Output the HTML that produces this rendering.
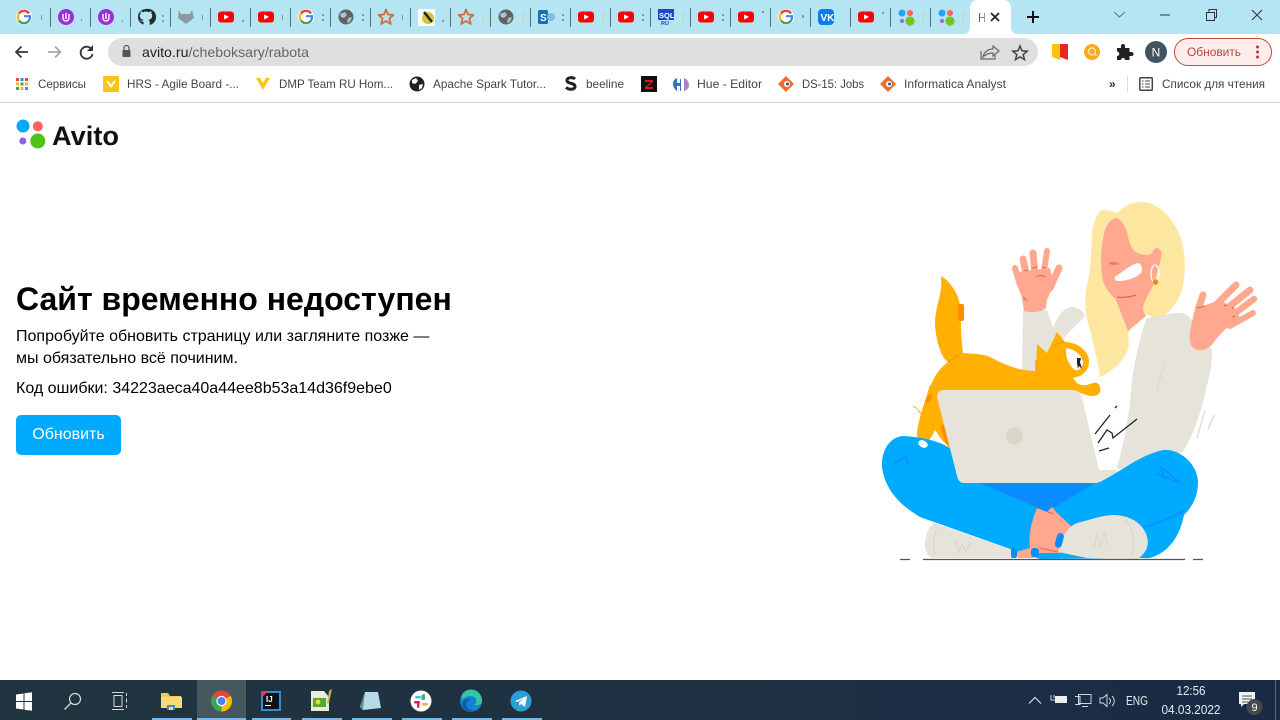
<!DOCTYPE html>
<html lang="ru"><head><meta charset="utf-8"><title>Avito</title>
<style>
html,body{margin:0;padding:0;width:1280px;height:720px;overflow:hidden;background:#fff}
svg{position:absolute;left:0;top:0}
text{font-family:"Liberation Sans",sans-serif}
.b{font-size:12px;fill:#444}
.h{position:absolute;left:16px;top:279px;margin:0;font:bold 32px/40px "Liberation Sans",sans-serif;color:#000;white-space:nowrap}
.p{position:absolute;left:16px;margin:0;font:16px/22px "Liberation Sans",sans-serif;color:#000;white-space:nowrap}
.btn{position:absolute;left:16px;top:415px;width:105px;height:40px;border-radius:5px;background:#00aaff;color:#fff;font:16px/39px "Liberation Sans",sans-serif;text-align:center}
</style></head><body>
<svg width="1280" height="720" viewBox="0 0 1280 720" xmlns="http://www.w3.org/2000/svg">
<defs>
<g id="gg"><circle r="8" fill="#fff"/><path d="M5-3.5A6 6 0 0 0-5-3.5" stroke="#e94235" stroke-width="2.4" fill="none"/><path d="M-5-3.5A6 6 0 0 0-5 3.5" stroke="#fabb05" stroke-width="2.4" fill="none"/><path d="M-5 3.5A6 6 0 0 0 5 3.5" stroke="#34a853" stroke-width="2.4" fill="none"/><path d="M5 3.5A6 6 0 0 0 6-.8H0" stroke="#4285f4" stroke-width="2.2" fill="none"/></g>
<g id="yt"><rect x="-8" y="-5.5" width="16" height="11" rx="3" fill="#f00"/><path d="M-2-2.6 3 0-2 2.6z" fill="#fff"/></g>
<g id="ut"><circle r="8" fill="#9b30d9"/><path d="M-3-3V1A3 3 0 0 0 3 1V-3M0-4V2" stroke="#fff" stroke-width="1.4" fill="none"/></g>
<g id="gl"><circle r="7.5" fill="#5f6368"/><path d="M-6-3 -1-5 1-2-2 1-5 0zM2 1 6 0 4 5 1 6z" fill="#b9c0c4"/></g>
<g id="st"><path d="M0-7.5 2-2.5 7.5-2 3.4 1.4 4.8 7 0 4-4.8 7-3.4 1.4-7.5-2-2-2.5z" fill="none" stroke="#c9703c" stroke-width="1.8" stroke-linejoin="round"/></g>
<g id="av"><circle cx="-4" cy="-4" r="3.5" fill="#1ea5f5"/><circle cx="4" cy="-4" r="3" fill="#f3625d"/><circle cx="-4" cy="4" r="2.2" fill="#9b6be0"/><circle cx="4" cy="4" r="4.6" fill="#74c618"/></g>
<g id="sep"><rect x="0" y="8" width="1" height="19" fill="#52717c"/></g>
<linearGradient id="tb" x1="0" x2="1" y1="0" y2="0"><stop offset="0" stop-color="#20343f"/><stop offset=".5" stop-color="#1f3142"/><stop offset="1" stop-color="#192a45"/></linearGradient>
</defs>

<!-- tab strip -->
<rect width="1280" height="34" fill="#b5e5f2"/>
<use href="#sep" x="50"/><use href="#sep" x="90"/><use href="#sep" x="130"/><use href="#sep" x="170"/><use href="#sep" x="210"/><use href="#sep" x="250"/><use href="#sep" x="290"/><use href="#sep" x="330"/><use href="#sep" x="370"/><use href="#sep" x="410"/><use href="#sep" x="450"/><use href="#sep" x="490"/><use href="#sep" x="530"/><use href="#sep" x="570"/><use href="#sep" x="610"/><use href="#sep" x="650"/><use href="#sep" x="690"/><use href="#sep" x="730"/><use href="#sep" x="770"/><use href="#sep" x="810"/><use href="#sep" x="850"/><use href="#sep" x="890"/><use href="#sep" x="930"/>
<use href="#gg" x="24" y="17"/><use href="#ut" x="66" y="17"/><use href="#ut" x="106" y="17"/>
<path d="M146 9a8 8 0 0 0-2.5 15.6v-3c-2 .4-3-.8-3.4-2 1 .5 1.6 1 2.2 1.4.4-.6.8-1 1.2-1.2-2-.3-3.7-1.3-3.7-4 0-1 .4-1.7.9-2.4-.2-.5-.3-1.3.1-2.2.9 0 1.7.5 2.3 1a7 7 0 0 1 5.8 0c.6-.5 1.4-1 2.3-1 .4.9.3 1.7.1 2.2.5.7.9 1.4.9 2.4 0 2.7-1.7 3.7-3.7 4 .6.5 1.2 1.3 1.2 2.4v2.8A8 8 0 0 0 146 9z" fill="#24292e"/>
<path d="M179 10l2 4h9l2-4 2 8-8 6-8-6z" fill="#8f9a9e"/>
<use href="#yt" x="226" y="17"/><use href="#yt" x="266" y="17"/><use href="#gg" x="306" y="17"/><use href="#gl" x="346" y="17"/><use href="#st" x="386" y="17"/>
<g><rect x="418" y="9" width="17" height="17" fill="#fff"/><ellipse cx="428" cy="18" rx="6" ry="6" fill="#d8c23a"/><path d="M424 12l8 10" stroke="#222" stroke-width="2.5"/></g>
<use href="#st" x="466" y="17"/><use href="#gl" x="506" y="17"/>
<g><rect x="538" y="10" width="10" height="14" rx="1.5" fill="#1a6fb5"/><text x="540" y="21" font-size="10" font-weight="bold" fill="#fff">S</text><circle cx="551" cy="17" r="4" fill="#7cc0dd"/></g>
<use href="#yt" x="586" y="17"/><use href="#yt" x="626" y="17"/>
<g><rect x="658" y="9" width="16" height="11" fill="#1c48c8"/><text x="659" y="18" font-size="7.5" font-weight="bold" fill="#fff">SQL</text><text x="661" y="25" font-size="5.5" font-weight="bold" fill="#1c48c8">RU</text></g>
<use href="#yt" x="706" y="17"/><use href="#yt" x="746" y="17"/><use href="#gg" x="786" y="17"/>
<rect x="818" y="9" width="16" height="16" rx="4" fill="#0c7cf2"/><text x="820.5" y="21" font-size="10" font-weight="bold" fill="#fff">VK</text>
<use href="#yt" x="866" y="17"/><use href="#av" x="906" y="17"/><use href="#av" x="946" y="17"/>
<g fill="#8b9a9e"><rect x="41" y="15" width="1" height="5"/><rect x="81" y="19" width="1" height="2"/><rect x="122" y="20" width="1" height="2"/><rect x="162" y="15" width="2" height="2"/><rect x="162" y="20" width="2" height="2"/><rect x="202" y="15" width="1" height="5"/><rect x="242" y="20" width="2" height="2"/><rect x="282" y="15" width="1" height="5"/><rect x="322" y="14" width="2" height="2"/><rect x="322" y="19" width="2" height="2"/><rect x="362" y="14" width="2" height="2"/><rect x="362" y="19" width="2" height="2"/><rect x="402" y="15" width="1" height="5"/><rect x="442" y="20" width="2" height="2"/></g>
<g fill="#c8d8c8"><rect x="482" y="14" width="2" height="8"/><rect x="522" y="12" width="2" height="10"/><rect x="602" y="12" width="2" height="10"/><rect x="682" y="12" width="2" height="10"/><rect x="922" y="12" width="2" height="10"/><rect x="962" y="12" width="2" height="10"/></g>
<g fill="#8b9a9e"><rect x="562" y="14" width="2" height="2"/><rect x="562" y="19" width="2" height="2"/><rect x="642" y="14" width="2" height="2"/><rect x="642" y="19" width="2" height="2"/><rect x="722" y="14" width="2" height="2"/><rect x="722" y="19" width="2" height="2"/><rect x="762" y="11" width="2" height="2"/><rect x="802" y="15" width="2" height="3"/><rect x="882" y="12" width="2" height="2"/></g>
<!-- active tab -->
<path d="M962 34c6 0 8-2 8-8V8c0-5 3-8 8-8h25c5 0 8 3 8 8v18c0 6 2 8 8 8z" fill="#fff"/>
<rect x="979" y="13" width="1" height="9" fill="#555"/><rect x="984" y="13" width="1" height="9" fill="#999"/><rect x="979" y="17" width="5" height="1" fill="#777"/>
<path d="M991 13l8 8M999 13l-8 8" stroke="#222" stroke-width="1.8"/>
<path d="M1033 11v12M1027 17h12" stroke="#111" stroke-width="2"/>
<path d="M1114 12l5.5 5 5.5-5" fill="none" stroke="#50707c" stroke-width="1"/>
<path d="M1160 15h10" stroke="#333" stroke-width="1"/>
<rect x="1206.5" y="12.5" width="8" height="8" fill="none" stroke="#333"/><path d="M1209 12v-2.5h7.5v8H1215" fill="none" stroke="#333"/>
<path d="M1252 10l10 10M1262 10l-10 10" stroke="#333" stroke-width="1"/>

<!-- toolbar -->
<rect y="34" width="1280" height="68" fill="#fff"/>
<path d="M28 52H16M21.5 46.5l-5.5 5.5 5.5 5.5" fill="none" stroke="#333" stroke-width="1.7"/>
<path d="M48 52h12.5M55 46.5l5.500 5.500-5.500 5.500" fill="none" stroke="#a8a8a8" stroke-width="1.7"/>
<path d="M92 50a6 6 0 1 0 .5 4" fill="none" stroke="#333" stroke-width="1.8"/><path d="M93 45v6h-6z" fill="#333"/>
<rect x="108" y="38" width="930" height="28" rx="14" fill="#dfdfdf"/>
<rect x="122.5" y="50" width="8" height="7" rx="1" fill="#555"/><path d="M124 50v-2a2.5 2.5 0 0 1 5 0v2" fill="none" stroke="#555" stroke-width="1.2"/>
<text x="142" y="57" font-size="14" fill="#222" textLength="167" lengthAdjust="spacingAndGlyphs">avito.ru<tspan fill="#666">/cheboksary/rabota</tspan></text>
<path d="M981 51v8h14v-4M983 57c1-5 5-8 10-8v-3l6 5-6 5v-3c-4 0-7 1-10 4z" fill="none" stroke="#666" stroke-width="1.2"/>
<path d="M1020 46l2 4.800 5.200.4-4 3.400 1.300 5-4.500-2.700-4.500 2.700 1.300-5-4-3.400 5.200-.4z" fill="none" stroke="#444" stroke-width="1.5"/>
<path d="M1052 44h8v16l-8-3z" fill="#f9c310"/><path d="M1060 44h8v16l-8-3z" fill="#e8251f"/>
<circle cx="1092" cy="52" r="8" fill="#f8a91c"/><circle cx="1092" cy="51.5" r="3.5" fill="none" stroke="#fde2a8" stroke-width="1.5"/><path d="M1094.5 54l2 2" stroke="#fde2a8" stroke-width="1.5"/>
<path d="M1117 48h4v-2a2 2 0 0 1 4 0v2h4.500v4h2a2 2 0 0 1 0 4h-2v4h-4.500a2 2 0 0 0-4 0h-4v-4a2 2 0 0 0 0-4.500z" fill="#222"/>
<circle cx="1156" cy="52" r="11" fill="#3f5560"/><text x="1156" y="56.5" font-size="12" fill="#fff" text-anchor="middle">N</text>
<rect x="1174.5" y="38.5" width="97" height="27" rx="13.5" fill="#fdeeec" stroke="#c9473f"/>
<text x="1187" y="56" font-size="12" fill="#b3453d" textLength="54" lengthAdjust="spacingAndGlyphs">Обновить</text>
<circle cx="1257.5" cy="47" r="1.5" fill="#c0392f"/><circle cx="1257.5" cy="52" r="1.5" fill="#c0392f"/><circle cx="1257.5" cy="57" r="1.5" fill="#c0392f"/>

<!-- bookmarks -->
<g><rect x="16" y="78" width="3" height="3" fill="#e8453c"/><rect x="20.5" y="78" width="3" height="3" fill="#4285f4"/><rect x="25" y="78" width="3" height="3" fill="#e8453c"/><rect x="16" y="82.5" width="3" height="3" fill="#fbbc05"/><rect x="20.5" y="82.5" width="3" height="3" fill="#34a853"/><rect x="25" y="82.5" width="3" height="3" fill="#fbbc05"/><rect x="16" y="87" width="3" height="3" fill="#34a853"/><rect x="20.5" y="87" width="3" height="3" fill="#fbbc05"/><rect x="25" y="87" width="3" height="3" fill="#4285f4"/></g>
<text class="b" x="38" y="88" textLength="48" lengthAdjust="spacingAndGlyphs">Сервисы</text>
<rect x="103" y="76" width="16" height="16" fill="#fcc419"/><path d="M106 81l5 7 5-7h-2.500l-2.500 3.500-2.500-3.500z" fill="#fff"/>
<text class="b" x="127" y="88" textLength="112" lengthAdjust="spacingAndGlyphs">HRS - Agile Board -...</text>
<path d="M256 78l7 12 7-12h-4l-3 5-3-5z" fill="#fcc419"/>
<text class="b" x="279" y="88" textLength="114" lengthAdjust="spacingAndGlyphs">DMP Team RU Hom...</text>
<circle cx="417" cy="84" r="7.5" fill="#222"/><path d="M412 80l4-2 2 3-3 3-3-1zM419 85l4-1-1 4-3 2z" fill="#fff"/>
<text class="b" x="433" y="88" textLength="113" lengthAdjust="spacingAndGlyphs">Apache Spark Tutor...</text>
<path d="M575 79c-2-2-8-2-8 1.500 0 3.500 8 2 8 6 0 3.500-6 3.500-9 1" fill="none" stroke="#222" stroke-width="3"/>
<text class="b" x="586" y="88" textLength="38" lengthAdjust="spacingAndGlyphs">beeline</text>
<rect x="641" y="76" width="16" height="16" fill="#111"/><path d="M645 80h8v2l-6 5h6v2h-8v-2l6-5h-6z" fill="#d6181f"/>
<path d="M677 78c-3 1-4 4-4 6s1 5 4 7v-5h3v5c1 0 1 0 1-1v-10c0-1 0-1-1-1v4h-3z" fill="#2f76bd"/><path d="M684 78c3 1 5 4 5 7s-2 5-5 6z" fill="#a986c9"/>
<text class="b" x="697" y="88" textLength="65" lengthAdjust="spacingAndGlyphs">Hue - Editor</text>
<path d="M786 76l8 8-8 8-8-8z" fill="#ee6c2a"/><circle cx="787" cy="84" r="3" fill="#fff"/><circle cx="787.5" cy="84" r="1.5" fill="#3c4aa5"/>
<text class="b" x="802" y="88" textLength="62" lengthAdjust="spacingAndGlyphs">DS-15: Jobs</text>
<path d="M888 76l8 8-8 8-8-8z" fill="#ee6c2a"/><circle cx="889" cy="84" r="3" fill="#fff"/><circle cx="889.5" cy="84" r="1.5" fill="#3c4aa5"/>
<text class="b" x="904" y="88" textLength="102" lengthAdjust="spacingAndGlyphs">Informatica Analyst</text>
<text x="1109" y="88" font-size="12" font-weight="bold" fill="#333">»</text>
<rect x="1127" y="76" width="1" height="16" fill="#ddd"/>
<rect x="1139.8" y="77.8" width="12.5" height="12.5" rx="1" fill="none" stroke="#444" stroke-width="1.5"/><path d="M1142 81h1.500M1145 81h5M1142 84h1.500M1145 84h5M1142 87h1.500M1145 87h5" stroke="#444"/>
<text class="b" x="1162" y="88" textLength="103" lengthAdjust="spacingAndGlyphs">Список для чтения</text>
<rect y="102" width="1280" height="1" fill="#cfcfcf"/>

<!-- avito logo -->
<circle cx="23" cy="126" r="6.5" fill="#0af"/><circle cx="37.8" cy="126.3" r="5" fill="#ff6163"/><circle cx="22.8" cy="141" r="3.5" fill="#965eeb"/><circle cx="37.8" cy="141" r="7.5" fill="#4ec419"/>
<text x="52" y="145" font-size="27" font-weight="bold" fill="#111" textLength="67" lengthAdjust="spacingAndGlyphs">Avito</text>

<!-- illustration: sweater -->
<path d="M1147 318C1160 316 1175 312 1183 313C1192 315 1200 335 1212 350C1212 365 1210 375 1207 385C1200 420 1190 440 1183 452L1117 470L1097 470L1097 482L1120 482L1117 467C1125 440 1130 410 1132 380C1135 360 1140 335 1147 318z" fill="#e6e3da"/>
<path d="M1023 310L1047 310L1053 328C1058 315 1065 307 1072 307C1078 307 1083 311 1085 316L1060 342L1052 372L1022 372z" fill="#e6e3da"/>
<path d="M1205 410l-8 28M1214 415l-6 14M1165 360l-8 30" stroke="#dcd9cf" stroke-width="1.3" fill="none"/>
<!-- hair silhouette -->
<path d="M1117 213C1125 204 1135 202 1143 202C1160 203 1174 220 1181 238C1186 255 1186 275 1182 290C1178 303 1168 316 1158 317C1152 318 1147 315 1143 312L1128 333L1129 345C1127 358 1112 372 1100 377C1097 360 1094 345 1090 330C1085 315 1084 300 1087 285C1091 270 1091 250 1092 235C1093 222 1098 210 1104 210C1109 210 1113 211 1117 213z" fill="#fde7a0"/>
<!-- face and neck -->
<path d="M1117 218C1124 222 1127 230 1128 237C1130 246 1134 252 1138 253C1146 256 1150 255 1152 253C1154 248 1157 247 1158 248C1162 250 1162 254 1161 258C1158 270 1155 280 1152 288C1147 296 1143 304 1143 310L1146 316L1128 331L1116 300C1108 292 1103 285 1102 276C1100 262 1101 245 1105 230C1108 222 1112 218 1117 218z" fill="#ffa88f"/>
<path d="M1115 277C1122 272 1132 264 1138 263C1142 264 1143 270 1141 273C1135 279 1125 281 1119 281C1115 281 1114 279 1115 277z" fill="#fff"/>
<path d="M1109 263c3-2 7-1 11 1-4 1-8 1-11 0z" fill="#f0796a"/>
<path d="M1117 297c6 1 13 0 19-2" stroke="#e8664f" stroke-width="1.2" fill="none"/>
<ellipse cx="1155" cy="274" rx="4" ry="9" fill="none" stroke="#fff" stroke-width="1.3"/><circle cx="1155.5" cy="282" r="2.8" fill="#f08a12"/>
<!-- right hand -->
<path d="M1194 312L1203 306L1220 300L1236 309L1240 318C1228 326 1220 334 1214 342C1208 350 1202 351 1197 350C1190 348 1189 340 1190 332z" fill="#ffa88f"/>
<g stroke="#ffa88f" stroke-linecap="round" fill="none"><path d="M1198 310l5-15" stroke-width="7"/><path d="M1213 308l23-23" stroke-width="7"/><path d="M1220 314l30-24" stroke-width="7"/><path d="M1226 320l28-21" stroke-width="6.500"/><path d="M1230 326l23-13" stroke-width="6"/></g>
<path d="M1197 308l8-2M1224 306l3-1M1232 307l2 2M1232 316l3 1" stroke="#e8664f" fill="none"/>
<!-- left hand -->
<path d="M1017 284L1018 272L1050 268L1054 284L1047 300L1046 308C1040 313 1030 313 1024 311L1022 298z" fill="#ffa88f"/>
<g stroke="#ffa88f" stroke-linecap="round" fill="none"><path d="M1020 285l-5-17" stroke-width="6"/><path d="M1027 278l-4-19" stroke-width="7"/><path d="M1035 275l-2-22" stroke-width="7"/><path d="M1043 278l4-27" stroke-width="6"/><path d="M1050 288l9-20" stroke-width="7"/></g>
<path d="M1024 271l4-1M1032 268l5-1M1042 267l4 1M1036 277c3-2 7-2 9 0M1023 297l4 4" stroke="#e8664f" fill="none"/>
<!-- cat -->
<path d="M941 276C950 281 958 293 960 305L961 325C961 335 962 345 963 353C975 354 985 354 992 358C1005 365 1020 371 1036 371L1037 344L1047 353L1057 332L1065 342C1075 342 1085 348 1088 356C1091 365 1087 372 1080 376L1073 378L1077 383C1086 389 1092 381 1097 383C1102 386 1101 394 1097 395C1090 398 1082 393 1078 392L1082 400L945 400L930 390C932 378 940 368 948 362C941 358 936 340 935 325C935 305 943 295 941 276z" fill="#ffb000"/>
<path d="M930 385L945 390L952 450L942 440L935 430C932 437 928 442 924 446C920 444 917 440 917 434C918 420 924 405 930 385z" fill="#ffb000"/>
<path d="M940 425L945 425L952 450L946 444z" fill="#ff8c00"/>
<path d="M1066 348C1074 349 1082 355 1083 362C1083 368 1079 371 1075 370C1069 366 1065 356 1066 348z" fill="#fff"/>
<path d="M1077 358l4 0-1 4 2 7-3-3-1 3-1-6z" fill="#222"/>
<rect x="958" y="304" width="6" height="17" rx="2" fill="#ff8c00"/>
<path d="M948 362l12-8M1036 360v11M1054 345l10-3" stroke="#ff8c00" fill="none"/>
<path d="M931 395l-4 7" stroke="#ff8c00" stroke-width="4" fill="none"/>
<path d="M913 406l5 3M918 410l3 4" stroke="#ffb000" fill="none"/>
<!-- under shoe -->
<path d="M925 545C925 535 928 528 934 523L1012 550L1014 558L932 558C928 556 925 552 925 545z" fill="#e6e3da"/>
<path d="M937 530c-5 8-4 20 0 26M955 540l4 12 3-8 4 8 4-10" stroke="#dad6ca" stroke-width="1.2" fill="none"/>
<!-- legs -->
<path d="M903 436C925 437 945 443 952 450L958 477L1100 482C1120 472 1140 455 1163 450C1180 448 1198 465 1198 482C1198 497 1192 507 1184 515C1180 535 1170 552 1150 558L1040 559L1013 550L920 517C900 505 885 490 882 467C881 450 890 437 903 436z" fill="#00aaff"/>
<ellipse cx="923" cy="444" rx="5" ry="3.5" fill="#fff" transform="rotate(25 923 444)"/>
<path d="M980 483H1095L1047 512z" fill="#0a8cff"/>
<path d="M1037 508L1047 512L1052 507L1057 513L1072 527L1060 553L1040 553L1034 558L1018 558L1016 552L1030 548C1028 535 1032 520 1037 508z" fill="#ffa88f"/>
<path d="M1048 512l6 2M1040 548l18 4" stroke="#e8664f" fill="none"/>
<rect x="1011" y="548" width="6" height="10" rx="2" fill="#0a8cff"/><rect x="1031" y="548" width="8" height="9" rx="3" fill="#0a8cff"/>
<path d="M1063 537C1066 530 1072 525 1077 523C1090 520 1102 515 1113 515C1125 515 1134 519 1140 525C1147 532 1150 542 1146 550C1143 555 1140 558 1137 559L1087 558L1058 552C1060 547 1061 542 1063 537z" fill="#e6e3da"/>
<rect x="1056" y="533" width="7" height="15" rx="3.5" fill="#0a8cff" transform="rotate(15 1060 540)"/>
<path d="M1094 548l3-14 4 12 3-14 4 14M1126 520c7 8 10 25 5 36" stroke="#dad6ca" stroke-width="1.2" fill="none"/>
<path d="M1185 510c-14 8-28 14-42 17" stroke="#0a8cff" stroke-width="1.3" fill="none"/>
<path d="M1156 473l-1 0 26 10-20-16 4 14M892 465l14-9 2 9" stroke="#0a8cff" stroke-width="1.3" fill="none"/>
<!-- laptop -->
<path d="M945 390H1072C1078 390 1081 393 1082 398L1101 478C1101 481 1099 483 1096 483H964C960 483 958 480 957 476L937 397C937 392 940 390 945 390z" fill="#e6e3da"/>
<circle cx="1014.5" cy="436" r="8.5" fill="#dbd6c9"/>
<path d="M1095 434l15-19M1115 408l2-2M1098 443l9-13 5 3 1 5 24-19M1099 451l10-3" stroke="#222" stroke-width="1.3" fill="none"/>
<!-- ground -->
<path d="M923 559.5H1185M900 559.5H910M1193 559.5H1203" stroke="#555" stroke-width="1.3"/>

<!-- taskbar -->
<rect y="680" width="1280" height="40" fill="url(#tb)"/>
<rect x="197" y="680" width="49" height="40" fill="#45585f"/>
<path d="M16 694.5l7.500-1v7.500H16zM24.5 693.3l7.500-1.100v8.800h-7.500zM16 702h7.500v7.500l-7.500-1zM24.5 702H32v8.800l-7.500-1.100z" fill="#fff"/>
<circle cx="75" cy="699" r="5.5" fill="none" stroke="#d5d9db" stroke-width="1.2"/><path d="M71 703l-6.500 6.500" stroke="#d5d9db" stroke-width="1.3"/>
<path d="M114 695.5h8v11h-8zM112 692.5h12M112 709.5h12M126.5 693v3M126.5 698.5v4M126.5 705v3" fill="none" stroke="#d5d9db"/>
<path d="M161 693h7l2 3h11v8h-20z" fill="#f6c64e"/><rect x="161" y="697" width="21" height="11" fill="#fbd974"/><path d="M167 705h8v5h-8z" fill="#2f8fd8"/><path d="M169 707h4v3h-4z" fill="#fbd974"/>
<circle cx="221.5" cy="701" r="10.5" fill="#ea4335"/><path d="M221.5 701l9.100-5.200A10.500 10.500 0 0 1 221.500 711.500z" fill="#fbbc05"/><path d="M221.5 701v10.500A10.500 10.500 0 0 1 212.400 695.800z" fill="#34a853"/><circle cx="221.5" cy="701" r="5.2" fill="#fff"/><circle cx="221.5" cy="701" r="4" fill="#4285f4"/>
<rect x="261" y="691" width="20" height="20" fill="#2b8fe0"/><rect x="263" y="693" width="16" height="16" fill="#111"/><path d="M261 691h7l-7 8z" fill="#e83278"/><text x="266" y="702" font-size="8" font-weight="bold" fill="#fff">IJ</text><rect x="265" y="705" width="6" height="1" fill="#fff"/>
<path d="M311 691h13l5 6v14h-18z" fill="#e5ecd8"/><rect x="313" y="698" width="13" height="9" fill="#5aa33b"/><circle cx="318" cy="702" r="2.5" fill="#d8e23a"/><path d="M329 691l3-2-3 14-2 1z" fill="#c5b54a"/>
<path d="M365 692h13l3 16-18 2-3-3z" fill="#b5dbe6"/><path d="M365 692l-5 15 3 3z" fill="#6d8f99"/>
<circle cx="421" cy="701" r="10.5" fill="#fff"/><rect x="415" y="696" width="6" height="2.5" rx="1.2" fill="#36c5f0"/><rect x="422.5" y="694" width="2.5" height="6" rx="1.2" fill="#2eb67d"/><rect x="422" y="703" width="6" height="2.5" rx="1.2" fill="#ecb22e"/><rect x="417" y="702" width="2.5" height="6" rx="1.2" fill="#e01e5a"/><rect x="414" y="701" width="6" height="2.5" rx="1.2" fill="#e01e5a"/><rect x="421.5" y="695" width="2.5" height="5" fill="#2eb67d"/>
<circle cx="471" cy="701" r="11" fill="#1482cf"/><path d="M463 693a11 11 0 0 1 19 8c0 4-5 5-8 4 2-1 3-3 2-6-2-4-10-4-14 1a8 8 0 0 1 1-7z" fill="#32c7a1"/><path d="M471 699a6 6 0 0 0-5 6c1 4 6 7 12 5a11 11 0 0 1-15-3c-2-5 2-9 8-8z" fill="#0c59a4"/>
<circle cx="521" cy="701" r="10.5" fill="#2a9fd8"/><path d="M515 701l12-5-2 11-4-3-1.500 2-.5-3.500 5-4-6.500 3.500z" fill="#fff"/>
<g fill="#76b9ed"><rect x="152" y="718" width="40" height="2"/><rect x="197" y="718" width="49" height="2"/><rect x="252" y="718" width="39" height="2"/><rect x="302" y="718" width="40" height="2"/><rect x="352" y="718" width="40" height="2"/><rect x="402" y="718" width="40" height="2"/><rect x="452" y="718" width="40" height="2"/><rect x="502" y="718" width="40" height="2"/></g>
<path d="M1029 703.5l6-6 6 6" fill="none" stroke="#d8dde2" stroke-width="1.2"/>
<rect x="1055" y="696" width="12" height="7" fill="#eee"/><path d="M1051 695v5h4M1054 695v3" stroke="#ccc" fill="none"/>
<path d="M1078.5 694.5h12.500v9h-12.500zM1075 696.500h5v8h-5M1082 706.500h6" fill="none" stroke="#d0d5da" stroke-width="1"/>
<path d="M1100 698h3l4-3.500v12l-4-3.500h-3zM1109 698c2 2 2 4 0 6M1112 696c3 3 3 7 0 10" fill="none" stroke="#d0d5da"/>
<text x="1126" y="705" font-size="13" fill="#e6eaee" textLength="22" lengthAdjust="spacingAndGlyphs">ENG</text>
<text x="1191" y="695" font-size="13" fill="#e6eaee" text-anchor="middle" textLength="29" lengthAdjust="spacingAndGlyphs">12:56</text>
<text x="1191" y="714" font-size="13" fill="#e6eaee" text-anchor="middle" textLength="59" lengthAdjust="spacingAndGlyphs">04.03.2022</text>
<path d="M1239 692h16v12h-11l-3 3v-3h-2z" fill="#f0f2f4"/><path d="M1242 696h10M1242 699h10M1242 702h6" stroke="#555"/>
<circle cx="1254.5" cy="707" r="8" fill="#45494c"/><text x="1254.5" y="711" font-size="11" fill="#fff" text-anchor="middle">9</text>
<rect x="1275" y="680" width="1" height="40" fill="#5a6a78"/>
</svg>
<h1 class="h">Сайт временно недоступен</h1>
<p class="p" style="top:326px">Попробуйте обновить страницу или загляните позже —</p>
<p class="p" style="top:348px">мы обязательно всё починим.</p>
<p class="p" style="top:378px">Код ошибки: 34223aeca40a44ee8b53a14d36f9ebe0</p>
<div class="btn">Обновить</div>
</body></html>
